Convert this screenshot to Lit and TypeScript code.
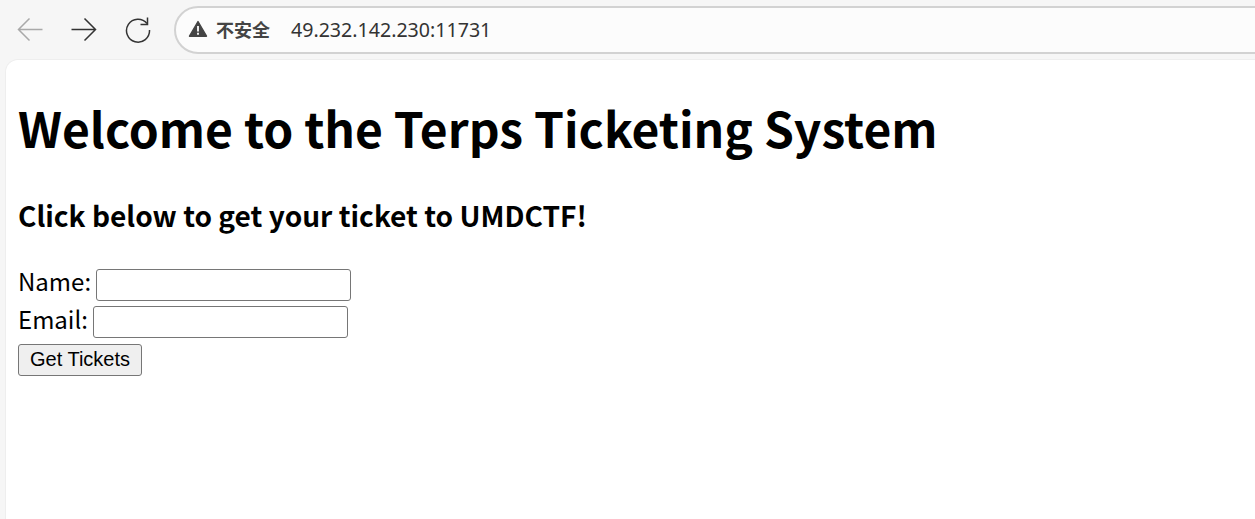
import { LitElement, css, html } from "lit";
import { customElement } from "lit/decorators.js";

@customElement("app-root")
export class AppRoot extends LitElement {
  render() {
    return html`
      <div class="toolbar">
        <button class="nav" aria-label="Back">
          <svg width="28" height="28" viewBox="0 0 28 28" fill="none" stroke="#a9a9a9" stroke-width="1.5">
            <path d="M26.5 14.5H2.5M13.5 3.5l-11 11 11 11" />
          </svg>
        </button>
        <button class="nav" aria-label="Forward">
          <svg width="28" height="28" viewBox="0 0 28 28" fill="none" stroke="#333" stroke-width="1.5">
            <path d="M1.5 14.5h24M14.5 3.5l11 11-11 11" />
          </svg>
        </button>
        <button class="nav" aria-label="Reload">
          <svg width="28" height="28" viewBox="0 0 28 28" fill="none" stroke="#333" stroke-width="1.5">
            <path d="M23 8.5A11.5 11.5 0 1 0 25.5 15" />
            <path d="M23.5 2.5v7h-7" />
          </svg>
        </button>
        <div class="omnibox">
          <svg class="alert" width="20" height="18" viewBox="0 0 20 18">
            <path fill="#444" stroke="#444" stroke-width="1.4" stroke-linejoin="round" d="M10 1.5 18.5 16.2H1.5Z" />
            <path fill="#fff" d="M9.1 6h1.8v5.6H9.1ZM9.1 12.8h1.8v1.9H9.1Z" />
          </svg>
          <span class="warn">不安全</span>
          <span class="url">49.232.142.230:11731</span>
        </div>
      </div>
      <main class="page">
        <h1>Welcome to the Terps Ticketing System</h1>
        <h2>Click below to get your ticket to UMDCTF!</h2>
        <form>
          <label class="row"><span>Name: </span><input type="text" /></label>
          <label class="row"><span>Email: </span><input type="text" /></label>
          <button class="submit" type="button">Get Tickets</button>
        </form>
      </main>
    `;
  }

  static styles = css`
    :host {
      display: block;
      height: 519px;
      overflow: hidden;
      background: #f6f6f6;
      font-family: "Noto Sans CJK SC", "Noto Sans", sans-serif;
    }

    .toolbar {
      display: flex;
      align-items: center;
      height: 60px;
      padding: 0 0 2px 3px;
      box-sizing: border-box;
    }

    .nav {
      display: flex;
      align-items: center;
      justify-content: center;
      width: 54px;
      height: 54px;
      padding: 0;
      background: none;
      border: none;
    }

    .omnibox {
      display: flex;
      align-items: center;
      flex: 1;
      height: 48px;
      margin: 2px -30px 0 9px;
      padding: 0 0 2px 12px;
      box-sizing: border-box;
      border: 2px solid #d2d2d2;
      border-radius: 24px;
      background: #fcfcfc;
    }

    .warn {
      margin-left: 8px;
      font-size: 18px;
      font-weight: 700;
      color: #444;
    }

    .url {
      margin-left: 21px;
      font-family: "Noto Sans", sans-serif;
      font-size: 19.6px;
      color: #333;
    }

    .page {
      height: 459px;
      margin-left: 6px;
      padding: 1px 12px;
      box-sizing: border-box;
      border-radius: 12px 0 0 0;
      background: #fff;
      box-shadow: 0 0 0 1px #eeeeee;
      color: #000;
      font-size: 24px;
      line-height: 37.5px;
    }

    h1 {
      margin: 31px 0 0;
      font-size: 48px;
      line-height: 70px;
      font-weight: 700;
    }

    h2 {
      margin: 33px 0 0;
      font-size: 28.08px;
      line-height: 40px;
      font-weight: 700;
    }

    form {
      display: flex;
      flex-direction: column;
      align-items: flex-start;
      gap: 5px;
      margin-top: 34px;
    }

    .row {
      display: flex;
      align-items: center;
      height: 32px;
    }

    .row span {
      margin-top: -8px;
      white-space: pre;
    }

    .row + .row span {
      margin-top: -6px;
    }

    input {
      width: 255px;
      height: 32px;
      padding: 0;
      box-sizing: border-box;
      border: 1px solid #767676;
      border-radius: 3px;
      background: #fff;
    }

    .submit {
      width: 124px;
      height: 32px;
      margin-top: 1px;
      padding: 0 0 2px;
      border: 1px solid #767676;
      border-radius: 3px;
      background: #efefef;
      color: #000;
      font-family: "Liberation Sans", Arial, sans-serif;
      font-size: 20px;
    }
  `;
}

declare global {
  interface HTMLElementTagNameMap {
    "app-root": AppRoot;
  }
}
